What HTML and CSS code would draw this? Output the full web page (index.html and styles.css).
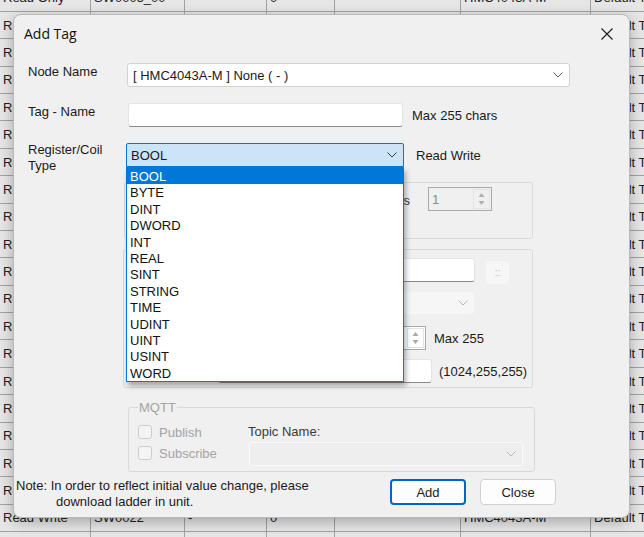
FILE: index.html
```html
<!DOCTYPE html>
<html lang="en">
<head>
    <meta charset="UTF-8">
    <meta name="viewport" content="width=device-width, initial-scale=1.0">
    <title>Add Tag</title>
    <link rel="stylesheet" href="styles.css">
</head>
<body>
    <!-- tag list behind the dialog -->
    <div class="tag-grid">
        <div class="cell">Read Only</div><div class="cell">SW0005_00</div><div class="cell"></div><div class="cell">0</div><div class="cell"></div><div class="cell">HMC4043A-M</div><div class="cell">Default Tag</div>
        <div class="cell">Read Write</div><div class="cell">SW0004</div><div class="cell">-</div><div class="cell">0</div><div class="cell"></div><div class="cell">HMC4043A-M</div><div class="cell">Default Tag</div>
        <div class="cell">Read Write</div><div class="cell">SW0005</div><div class="cell">-</div><div class="cell">0</div><div class="cell"></div><div class="cell">HMC4043A-M</div><div class="cell">Default Tag</div>
        <div class="cell">Read Write</div><div class="cell">SW0006</div><div class="cell">-</div><div class="cell">0</div><div class="cell"></div><div class="cell">HMC4043A-M</div><div class="cell">Default Tag</div>
        <div class="cell">Read Write</div><div class="cell">SW0007</div><div class="cell">-</div><div class="cell">0</div><div class="cell"></div><div class="cell">HMC4043A-M</div><div class="cell">Default Tag</div>
        <div class="cell">Read Write</div><div class="cell">SW0008</div><div class="cell">-</div><div class="cell">0</div><div class="cell"></div><div class="cell">HMC4043A-M</div><div class="cell">Default Tag</div>
        <div class="cell">Read Write</div><div class="cell">SW0009</div><div class="cell">-</div><div class="cell">0</div><div class="cell"></div><div class="cell">HMC4043A-M</div><div class="cell">Default Tag</div>
        <div class="cell">Read Write</div><div class="cell">SW0010</div><div class="cell">-</div><div class="cell">0</div><div class="cell"></div><div class="cell">HMC4043A-M</div><div class="cell">Default Tag</div>
        <div class="cell">Read Write</div><div class="cell">SW0011</div><div class="cell">-</div><div class="cell">0</div><div class="cell"></div><div class="cell">HMC4043A-M</div><div class="cell">Default Tag</div>
        <div class="cell">Read Write</div><div class="cell">SW0012</div><div class="cell">-</div><div class="cell">0</div><div class="cell"></div><div class="cell">HMC4043A-M</div><div class="cell">Default Tag</div>
        <div class="cell">Read Write</div><div class="cell">SW0013</div><div class="cell">-</div><div class="cell">0</div><div class="cell"></div><div class="cell">HMC4043A-M</div><div class="cell">Default Tag</div>
        <div class="cell">Read Write</div><div class="cell">SW0014</div><div class="cell">-</div><div class="cell">0</div><div class="cell"></div><div class="cell">HMC4043A-M</div><div class="cell">Default Tag</div>
        <div class="cell">Read Write</div><div class="cell">SW0015</div><div class="cell">-</div><div class="cell">0</div><div class="cell"></div><div class="cell">HMC4043A-M</div><div class="cell">Default Tag</div>
        <div class="cell">Read Write</div><div class="cell">SW0016</div><div class="cell">-</div><div class="cell">0</div><div class="cell"></div><div class="cell">HMC4043A-M</div><div class="cell">Default Tag</div>
        <div class="cell">Read Write</div><div class="cell">SW0017</div><div class="cell">-</div><div class="cell">0</div><div class="cell"></div><div class="cell">HMC4043A-M</div><div class="cell">Default Tag</div>
        <div class="cell">Read Write</div><div class="cell">SW0018</div><div class="cell">-</div><div class="cell">0</div><div class="cell"></div><div class="cell">HMC4043A-M</div><div class="cell">Default Tag</div>
        <div class="cell">Read Write</div><div class="cell">SW0019</div><div class="cell">-</div><div class="cell">0</div><div class="cell"></div><div class="cell">HMC4043A-M</div><div class="cell">Default Tag</div>
        <div class="cell">Read Write</div><div class="cell">SW0020</div><div class="cell">-</div><div class="cell">0</div><div class="cell"></div><div class="cell">HMC4043A-M</div><div class="cell">Default Tag</div>
        <div class="cell">Read Write</div><div class="cell">SW0021</div><div class="cell">-</div><div class="cell">0</div><div class="cell"></div><div class="cell">HMC4043A-M</div><div class="cell">Default Tag</div>
        <div class="cell">Read Write</div><div class="cell">SW0022</div><div class="cell">-</div><div class="cell">0</div><div class="cell"></div><div class="cell">HMC4043A-M</div><div class="cell">Default Tag</div>
        <div class="cell"></div><div class="cell"></div><div class="cell"></div><div class="cell"></div><div class="cell"></div><div class="cell"></div><div class="cell"></div>
    </div>

    <div class="dialog">
        <div class="titlebar">
            <span class="title">Add Tag</span>
            <svg class="close-x" width="12" height="12" viewBox="0 0 12 12">
                <path d="M0.5 0.5 L11.5 11.5 M11.5 0.5 L0.5 11.5" stroke="#1a1a1a" stroke-width="1.1" fill="none"/>
            </svg>
        </div>

        <div class="form">
            <div class="row">
                <span class="lbl">Node Name</span>
                <div class="combo combo-node">
                    <span class="combo-text">[ HMC4043A-M ] None ( - )</span>
                    <svg class="chev" width="10" height="6" viewBox="0 0 10 6"><path d="M0.5 0.5 L5 5 L9.5 0.5" stroke="#606060" fill="none"/></svg>
                </div>
            </div>

            <div class="row row-gap">
                <span class="lbl">Tag - Name</span>
                <div class="textbox tag-name"></div>
                <span class="hint">Max 255 chars</span>
            </div>

            <div class="row row-gap">
                <span class="lbl lbl-two">Register/Coil<br>Type</span>
                <div class="combo combo-type">
                    <span class="combo-text">BOOL</span>
                    <svg class="chev" width="10" height="6" viewBox="0 0 10 6"><path d="M0.5 0.5 L5 5 L9.5 0.5" stroke="#404040" fill="none"/></svg>
                    <ul class="droplist">
                        <li class="picked">BOOL</li>
                        <li>BYTE</li>
                        <li>DINT</li>
                        <li>DWORD</li>
                        <li>INT</li>
                        <li>REAL</li>
                        <li>SINT</li>
                        <li>STRING</li>
                        <li>TIME</li>
                        <li>UDINT</li>
                        <li>UINT</li>
                        <li>USINT</li>
                        <li>WORD</li>
                    </ul>
                </div>
                <span class="hint hint-rw">Read Write</span>
            </div>

            <div class="group group-count">
                <span class="glabel">No. of Registers</span>
                <div class="spin spin-off">
                    <span class="spin-val">1</span>
                    <div class="spin-btns">
                        <svg width="9" height="18" viewBox="0 0 9 18"><path d="M4.5 3 L7.5 7 L1.5 7 Z M1.5 11 L7.5 11 L4.5 15 Z" fill="#b0b0b0"/></svg>
                    </div>
                </div>
            </div>

            <div class="group group-addr">
                <div class="grow g1">
                    <div class="textbox addr"></div>
                    <div class="browse">::</div>
                </div>
                <div class="grow g2">
                    <div class="combo combo-off">
                        <svg class="chev" width="10" height="6" viewBox="0 0 10 6"><path d="M0.5 0.5 L5 5 L9.5 0.5" stroke="#b8b8b8" fill="none"/></svg>
                    </div>
                </div>
                <div class="grow g3">
                    <div class="spin spin-len">
                        <div class="spin-btns">
                            <svg width="9" height="18" viewBox="0 0 9 18"><path d="M4.5 3 L7.5 7 L1.5 7 Z M1.5 11 L7.5 11 L4.5 15 Z" fill="#a8a8a8"/></svg>
                        </div>
                    </div>
                    <span class="hint">Max 255</span>
                </div>
                <div class="grow g4">
                    <div class="textbox init"></div>
                    <span class="hint">(1024,255,255)</span>
                </div>
            </div>

            <fieldset class="mqtt">
                <legend>MQTT</legend>
                <div class="mqtt-body">
                    <div class="checks">
                        <div class="check-row"><span class="box"></span>Publish</div>
                        <div class="check-row"><span class="box"></span>Subscribe</div>
                    </div>
                    <div class="topic">
                        <span class="topic-lbl">Topic Name:</span>
                        <div class="combo combo-topic">
                            <svg class="chev" width="10" height="6" viewBox="0 0 10 6"><path d="M0.5 0.5 L5 5 L9.5 0.5" stroke="#b8b8b8" fill="none"/></svg>
                        </div>
                    </div>
                </div>
            </fieldset>
        </div>

        <div class="footer">
            <p class="note">Note: In order to reflect initial value change, please<br><span class="indent">download ladder in unit.</span></p>
            <div class="buttons">
                <button class="btn btn-default">Add</button>
                <button class="btn">Close</button>
            </div>
        </div>
    </div>
</body>
</html>
```

FILE: styles.css
```css
body {
    margin: 0;
    overflow: hidden;
    height: 537px;
    background: #e4e4e4;
    font-family: 'Liberation Sans', Arial, sans-serif;
    font-size: 13px;
    color: #1a1a1a;
    position: relative;
}

/* background grid */
.tag-grid {
    display: grid;
    grid-template-columns: 91px 94px 82px 68px 126px 130px 90px;
    grid-auto-rows: 27.39px;
    margin-top: -15.4px;
    width: 681px;
}

.cell {
    border-right: 1px solid #a2a2a2;
    border-bottom: 1px solid #a2a2a2;
    background: #e6e6e6;
    padding: 0 3px;
    display: flex;
    align-items: center;
    white-space: nowrap;
    overflow: hidden;
    color: #222;
}

/* dialog */
.dialog {
    position: absolute;
    left: 13px;
    top: 14px;
    width: 617px;
    height: 504px;
    box-sizing: border-box;
    background: #f0f0f0;
    border: 1px solid #b9b9b9;
    border-radius: 8px;
    box-shadow: 0 4px 14px rgba(0,0,0,0.28);
    display: flex;
    flex-direction: column;
}

.titlebar {
    height: 37px;
    display: flex;
    align-items: center;
    padding: 0 16px 0 10px;
}

.title {
    font-family: 'Segoe UI', 'Open Sans', sans-serif;
    font-size: 14px;
    color: #111;
    flex: 1;
    margin-top: -1px;
}

.close-x {
    display: block;
}

.form {
    padding: 11px 0 0 14px;
}

.row {
    display: flex;
    align-items: center;
    height: 24px;
}

.row-gap {
    margin-top: 16px;
}

.lbl {
    width: 99px;
    flex: none;
    align-self: flex-start;
    line-height: 15px;
    padding-top: 1px;
}

.lbl-two {
    line-height: 16px;
    padding-top: 0;
    margin-top: -1px;
}

.combo {
    position: relative;
    height: 24px;
    box-sizing: border-box;
    display: flex;
    align-items: center;
    border-radius: 3px;
}

.combo-text {
    flex: 1;
    padding-left: 5px;
}

.chev {
    margin-right: 6px;
    flex: none;
}

.combo-node {
    width: 443px;
    background: #fff;
    border: 1px solid #d2d2d2;
}

.combo-type {
    width: 278px;
    margin-left: -1px;
    background: #cce4f7;
    border: 1px solid #0078d7;
    border-radius: 2px 2px 0 0;
}

.combo-type .combo-text {
    padding-left: 4px;
}

.droplist {
    position: absolute;
    left: -1px;
    top: 23px;
    width: 278px;
    margin: 0;
    padding: 0;
    list-style: none;
    background: #fff;
    border: 1px solid #0078d7;
    box-sizing: border-box;
    box-shadow: 2px 4px 5px rgba(0,0,0,0.3);
    z-index: 5;
}

.droplist li {
    height: 16.4px;
    line-height: 18px;
    padding-left: 3px;
    color: #111;
}

.droplist li.picked {
    background: #0078d7;
    color: #fff;
}

.textbox {
    height: 24px;
    box-sizing: border-box;
    background: #fff;
    border: 1px solid #e4e4e4;
    border-bottom: 1px solid #8a8a8a;
    border-radius: 3px;
}

.tag-name {
    width: 275px;
    margin-left: 1px;
}

.hint {
    margin-left: 9px;
    white-space: nowrap;
}

.hint-rw {
    margin-left: 12px;
}

/* group boxes */
.group {
    box-sizing: border-box;
    border: 1px solid #d9d9d9;
    border-radius: 3px;
}

.group-count {
    width: 409px;
    height: 57px;
    margin: 15px 0 0 96px;
    display: flex;
    justify-content: flex-end;
    align-items: flex-start;
    padding: 4px 40px 0 0;
}

.glabel {
    margin: 6px 18px 0 0;
    color: #3a3a3a;
}

.spin {
    height: 24px;
    box-sizing: border-box;
    border: 1px solid #a9a9a9;
    display: flex;
    align-items: center;
}

.spin-off {
    width: 64px;
    background: #f0f0f0;
}

.spin-val {
    flex: 1;
    padding-left: 3px;
    color: #8c8c8c;
}

.spin-btns {
    width: 17px;
    height: 20px;
    margin-right: 1px;
    display: flex;
    align-items: center;
    justify-content: center;
    border: 1px solid #e3e3e3;
    box-sizing: border-box;
}

.group-addr {
    width: 410px;
    height: 139px;
    margin: 10px 0 0 95px;
    padding: 8px 0 0 94px;
}

.grow {
    display: flex;
    align-items: center;
}

.g1 {
    height: 24px;
}

.addr {
    width: 257px;
}

.browse {
    width: 23px;
    height: 23px;
    margin: 4px 0 0 11px;
    border-radius: 4px;
    background: #f6f6f6;
    color: #b8b8b8;
    font-size: 10px;
    display: flex;
    align-items: center;
    justify-content: center;
}

.g2 {
    margin-top: 10px;
}

.combo-off {
    width: 256px;
    height: 22px;
    background: #f6f6f6;
    justify-content: flex-end;
}

.g3 {
    margin-top: 12px;
}

.spin-len {
    width: 208px;
    background: #fff;
    justify-content: flex-end;
}

.g3 .hint {
    margin-left: 8px;
}

.g4 {
    margin-top: 9px;
}

.init {
    width: 214px;
}

.g4 .hint {
    margin-left: 7px;
}

/* MQTT */
.mqtt {
    width: 407px;
    height: 72px;
    box-sizing: border-box;
    margin: 12px 0 0 100px;
    padding: 0 0 0 9px;
    border: 1px solid #d9d9d9;
    border-radius: 3px;
}

.mqtt legend {
    padding: 0 1px;
    color: #a3a3a3;
    line-height: 15px;
}

.mqtt-body {
    display: flex;
}

.checks {
    width: 110px;
    padding-top: 10px;
}

.check-row {
    display: flex;
    align-items: center;
    height: 14px;
    color: #a3a3a3;
}

.check-row + .check-row {
    margin-top: 7px;
}

.box {
    width: 14px;
    height: 14px;
    box-sizing: border-box;
    border: 1px solid #cdcdcd;
    border-radius: 3px;
    background: #f4f4f4;
    margin-right: 7px;
}

.topic {
    display: flex;
    flex-direction: column;
    padding-top: 9px;
}

.topic-lbl {
    line-height: 15px;
    color: #3a3a3a;
}

.combo-topic {
    width: 274px;
    margin: 3px 0 0 1px;
    background: #eeeeee;
    border: 1px solid #fafafa;
    justify-content: flex-end;
}

/* footer */
.footer {
    display: flex;
    align-items: flex-start;
    margin-top: 6px;
    padding: 0 73px 0 2px;
}

.note {
    margin: 0;
    line-height: 16px;
    flex: 1;
}

.indent {
    padding-left: 40px;
}

.buttons {
    display: flex;
    gap: 14px;
    margin-top: 1px;
}

.btn {
    width: 76px;
    height: 26px;
    box-sizing: border-box;
    background: #fdfdfd;
    border: 1px solid #d0d0d0;
    border-radius: 4px;
    font-family: 'Liberation Sans', Arial, sans-serif;
    font-size: 13px;
    color: #1a1a1a;
    padding: 0;
}

.btn-default {
    border: 2px solid #0067c0;
}
```
